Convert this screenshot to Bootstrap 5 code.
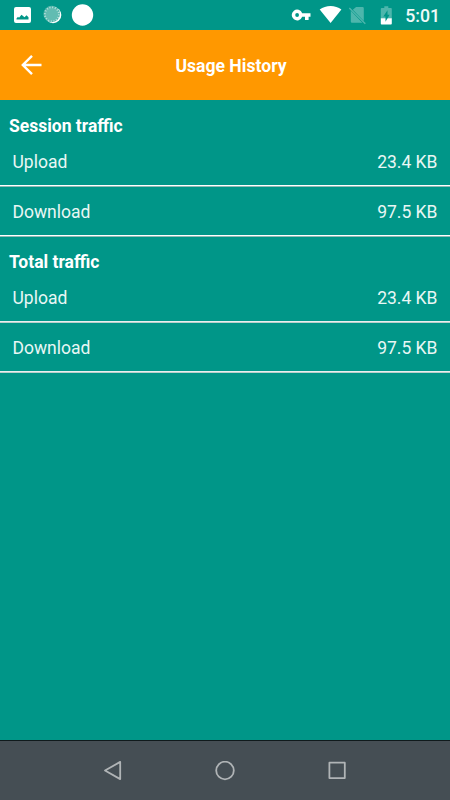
<!DOCTYPE html>
<html lang="en">
<head>
<meta charset="utf-8">
<meta name="viewport" content="width=device-width, initial-scale=1">
<title>Usage History</title>
<link href="https://cdn.jsdelivr.net/npm/bootstrap@5.3.0/dist/css/bootstrap.min.css" rel="stylesheet">
<style>
body { font-family: Roboto, "Liberation Sans", sans-serif; background: #009688; color: #fff; height: 800px; overflow: hidden; }
svg { display: block; flex: none; }
.status { height: 30px; padding: 0 10px 0 12px; }
.clock { font-size: 17.700px; font-weight: 500; line-height: 30px; padding-top: 1px; color: #effaf8; }
.appbar { height: 70px; background: #ff9800; }
.appbar .back { width: 62px; padding-left: 18px; }
.appbar .spacer { width: 50px; }
.title { font-size: 17.600px; font-weight: 700; line-height: 24px; padding-top: 2px; }
.heading { height: 37px; padding: 15px 9px 0; font-size: 17.500px; font-weight: 700; line-height: 22px; margin: 0; }
.usage { height: 50px; padding: 2px 12.500px 0; font-size: 17.500px; color: #e9f7f5; border-bottom: 1px solid #8fb9b4; box-shadow: inset 0 -1px #fff; }
.usage-block + .usage-block .heading { height: 36px; padding-top: 14px; }
.usage-block + .usage-block .usage { border-bottom-color: #b9cfcc; box-shadow: inset 0 -1px #e9f1f0; }
.navkeys { height: 60px; background: #454e54; border-top: 1px solid #101a1c; gap: 92px; }
</style>
<script src="https://cdn.jsdelivr.net/npm/bootstrap@5.3.0/dist/js/bootstrap.bundle.min.js"></script>
</head>
<body class="d-flex flex-column">
<div class="status d-flex justify-content-between align-items-center">
  <svg width="90" height="30" viewBox="12 0 90 30">
    <path fill="#fff" fill-rule="evenodd" d="M16 7h13a2 2 0 0 1 2 2v12a2 2 0 0 1-2 2H16a2 2 0 0 1-2-2V9a2 2 0 0 1 2-2zM16.500 19.500h12v-2.300l-2-2-2 2-3-2.500-2.500 3-1-1-1.500 1.800z"/>
    <circle cx="53" cy="15" r="8.300" fill="#fff"/>
    <circle cx="51.700" cy="14" r="8.300" fill="#4fb3a8"/>
    <circle cx="51.900" cy="14.300" r="7" fill="#62bcb2" stroke="#b5e0db" stroke-width="1.800" stroke-dasharray="1.100 1.650"/>
    <circle cx="82.500" cy="15" r="10.700" fill="#fff"/>
  </svg>
  <div class="d-flex align-items-center">
    <svg width="117" height="30" viewBox="288.200 0 117 30">
      <path fill="#fff" fill-rule="evenodd" d="M302.400 13.200a5.400 5.400 0 1 0 0 3.600h2.800v3.200h3.600v-3.200h1.900v-3.600zM297.300 16.900a1.900 1.900 0 1 1 0-3.800 1.900 1.900 0 0 1 0 3.800z"/>
      <path fill="#fff" d="M330.800 23.100 319.900 9.500c6-4.700 15.800-4.700 21.700 0z"/>
      <path fill="#4db6ac" d="M356.300 7h6.500q1.200 0 1.200 1.200v12.700L353 9.800zM351 10.800 362.500 22.700H352.200a1.200 1.200 0 0 1-1.200-1.200z"/>
      <path stroke="#4db6ac" stroke-width="1.400" d="m349.500 8 16 15.800"/>
      <path fill="#4db6ac" d="M384.500 6.300h4v1.800h2.700q.8 0 .8.900v9.500h-11V9q0-.9.800-.9h2.700z"/>
      <path fill="#fff" d="M381 18.200h11v5.300q0 .9-.8.900h-9.400q-.8 0-.8-.9z"/>
      <path fill="#009688" d="M387.700 10.200v4.500h2.100l-4.100 7v-5.300h-2.200z"/>
    </svg>
    <span class="clock">5:01</span>
  </div>
</div>

<header class="appbar d-flex align-items-center">
  <a class="back text-white" href="#" aria-label="Back">
    <svg width="26" height="26" viewBox="0 0 26 26" fill="none" stroke="currentColor" stroke-width="2.400"><path d="M23.500 13H5M14 3.800 4.800 13l9.200 9.200"/></svg>
  </a>
  <h1 class="title flex-grow-1 text-center mb-0">Usage History</h1>
  <span class="spacer"></span>
</header>

<main class="flex-grow-1">
  <section class="usage-block">
    <h2 class="heading">Session traffic</h2>
    <ul class="list-unstyled mb-0">
      <li class="usage d-flex justify-content-between align-items-center"><span>Upload</span><span>23.4 KB</span></li>
      <li class="usage d-flex justify-content-between align-items-center"><span>Download</span><span>97.5 KB</span></li>
    </ul>
  </section>
  <section class="usage-block">
    <h2 class="heading">Total traffic</h2>
    <ul class="list-unstyled mb-0">
      <li class="usage d-flex justify-content-between align-items-center"><span>Upload</span><span>23.4 KB</span></li>
      <li class="usage d-flex justify-content-between align-items-center"><span>Download</span><span>97.5 KB</span></li>
    </ul>
  </section>
</main>

<nav class="navkeys d-flex justify-content-center align-items-center">
  <svg width="20" height="20" viewBox="0 0 20 20" fill="none" stroke="#b0b4b6" stroke-width="1.800" stroke-linejoin="round"><path d="M17.200.900v17.200L2 9.500z"/></svg>
  <svg width="20" height="20" viewBox="0 0 20 20" fill="none" stroke="#b0b4b6" stroke-width="1.800"><circle cx="10" cy="9.500" r="8.800"/></svg>
  <svg width="20" height="20" viewBox="0 0 20 20" fill="none" stroke="#b0b4b6" stroke-width="1.800" stroke-linejoin="round"><path d="M2.400 1.700h15.400v15.400H2.400z"/></svg>
</nav>
</body>
</html>
